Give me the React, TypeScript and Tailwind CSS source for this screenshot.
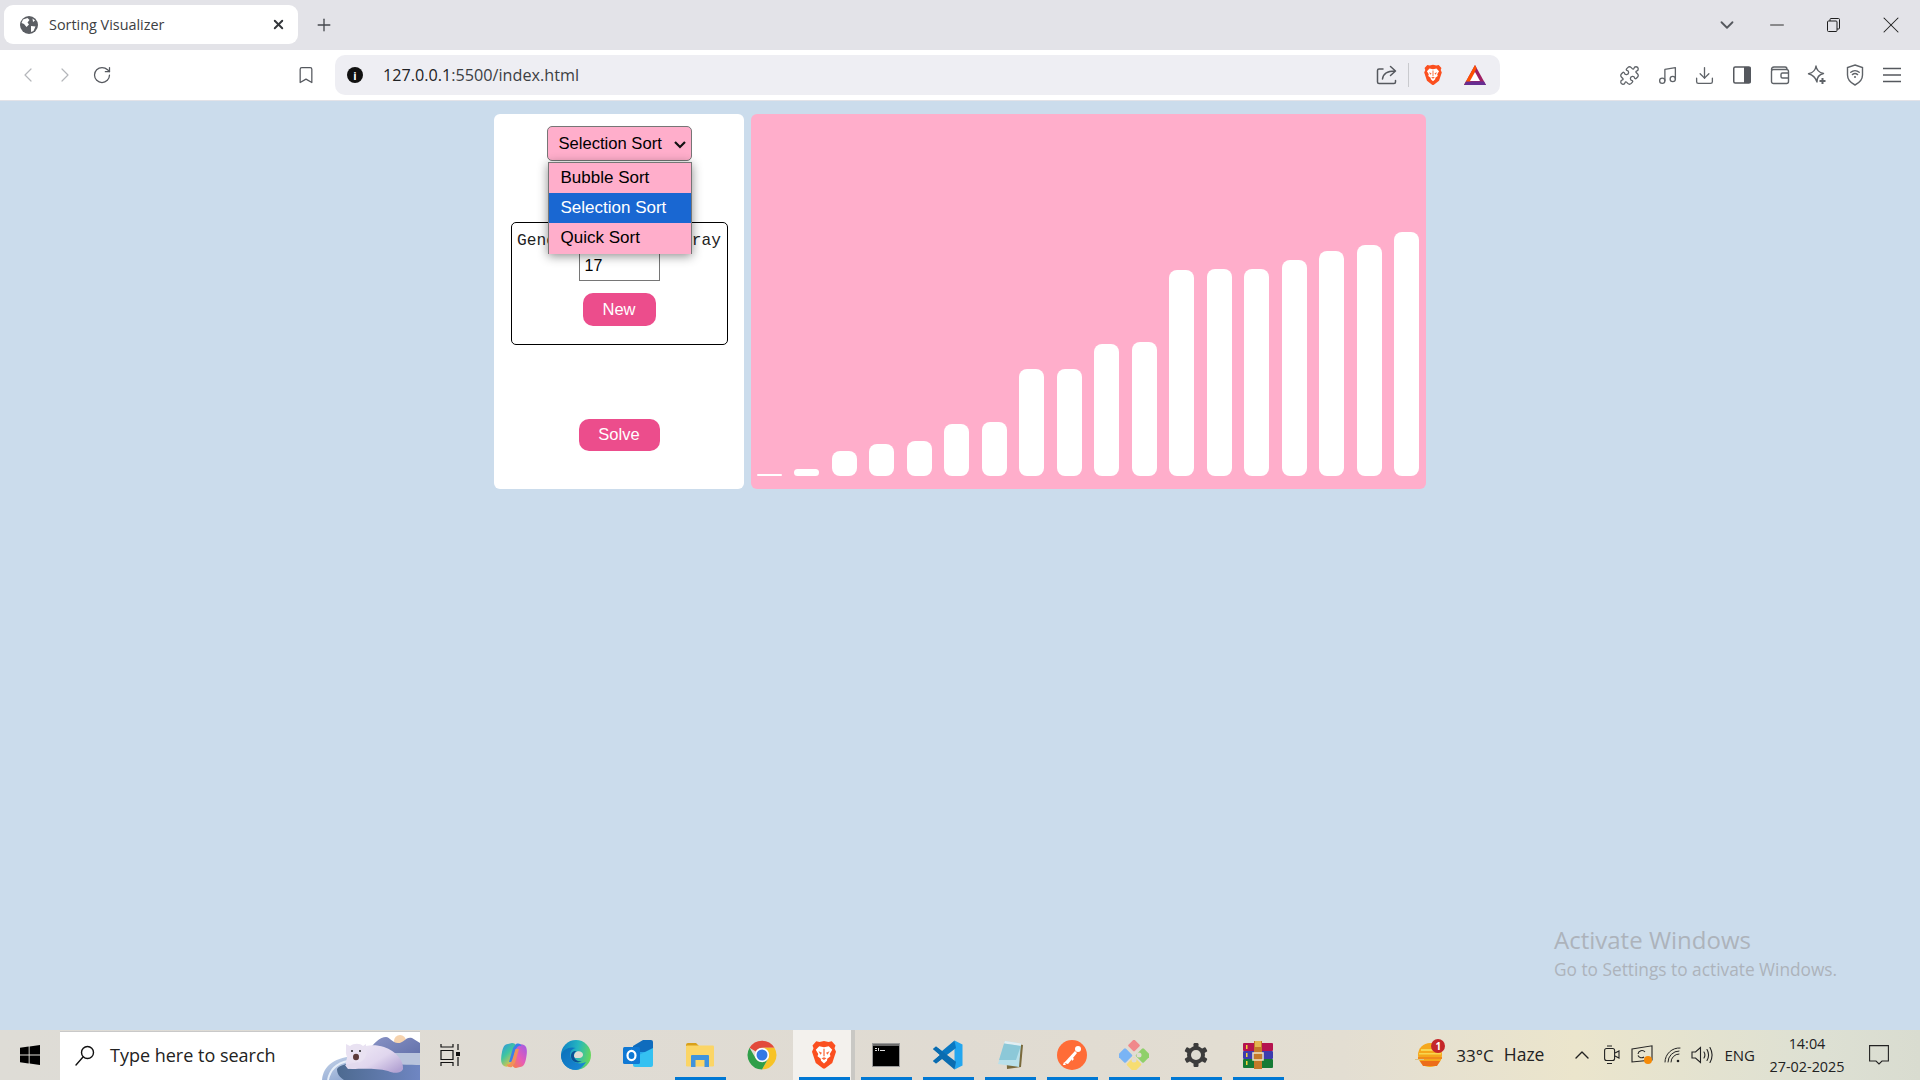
import React from "react";
import { Puzzle, Music, Download, ChevronLeft, ChevronRight, RotateCw, Bookmark, X, Plus, ChevronDown, Minus, ChevronUp } from "lucide-react";

const SANS = "font-['Open_Sans','Noto_Sans',sans-serif]";
const bars = [2, 7, 25, 32, 35, 52, 54, 107, 107, 132, 134, 206, 207, 207, 216, 225, 231, 244];

function Globe() {
  return (
    <svg width="18" height="18" viewBox="0 0 18 18">
      <circle cx="9" cy="9" r="9" fill="#5b5e63" />
      <path d="M3 3.5 L7.5 2 L9.5 4 L7.5 6.5 L9 8.5 L6.5 11 L4 8 L1.5 7 Z" fill="#fff" />
      <path d="M11 10 L15.5 10.5 L13.5 15 L11 16 Z M12.5 2.5 L15 4.5 L13 6 Z" fill="#fff" />
    </svg>
  );
}

function BraveLion({ size }: { size: number }) {
  return (
    <svg width={size} height={size} viewBox="0 0 24 24">
      <path d="M12 .8 L15.6 1.6 L18.2 1 L21.2 4.4 L20.4 6.6 L21.6 9.4 L18.6 18.4 L13 22.6 Q12 23.3 11 22.6 L5.4 18.4 L2.4 9.4 L3.6 6.6 L2.8 4.4 L5.8 1 L8.4 1.6 Z" fill="#fb4f1f" />
      <path d="M8.2 5 L12 5.8 L15.8 5 L18.6 7.8 L16.6 11.2 L17.2 13 L14.6 15 L14.4 16.6 L12 18.8 L9.6 16.6 L9.4 15 L6.8 13 L7.4 11.2 L5.4 7.8 Z" fill="#fff" />
      <path d="M7.6 9 L10.4 10.2 L9.2 11.8 Z M16.4 9 L13.6 10.2 L14.8 11.8 Z M10 14.6 L12 13.8 L14 14.6 L12 16 Z M11.5 7 H12.5 V13 H11.5 Z" fill="#fb6a3c" />
    </svg>
  );
}

function ShareIcon() {
  return (
    <svg width="22" height="20" viewBox="0 0 22 20" fill="none" stroke="#55585e" strokeWidth="1.5" strokeLinecap="round" strokeLinejoin="round">
      <path d="M7 4 H3 Q1.5 4 1.5 5.5 V17 Q1.5 18.5 3 18.5 H18 Q19.5 18.5 19.5 17 V15.5" />
      <path d="M6.5 14 C7 9 11 6 19 6 M14.5 1.5 L19.5 6 L14.5 10.5" />
    </svg>
  );
}

function BatIcon() {
  return (
    <svg width="22" height="20" viewBox="0 0 22 20">
      <path d="M11 0 L22 20 H0 Z" fill="#9e1f63" />
      <path d="M0 20 L11 0 L12.5 3 L5 20 Z" fill="#ff5000" />
      <path d="M0 20 H22 L20 16.5 H2 Z" fill="#662d91" />
      <path d="M11 7 L16 16 H6 Z" fill="#fff" />
    </svg>
  );
}

function SidePanel() {
  return (
    <svg width="18" height="18" viewBox="0 0 18 18">
      <rect x=".75" y="1" width="16.5" height="16" rx="1.5" fill="none" stroke="#55585e" strokeWidth="1.5" />
      <rect x="11" y="1" width="6.5" height="16" fill="#55585e" />
    </svg>
  );
}

function WalletIcon() {
  return (
    <svg width="20" height="20" viewBox="0 0 20 20" fill="none" stroke="#5f6368" strokeWidth="1.4" strokeLinejoin="round">
      <path d="M1.5 5 Q1.5 2 4 2 H15 Q17 2 17 4.5" />
      <rect x="1.5" y="4.5" width="17" height="14" rx="2" />
      <path d="M18.5 8 H12.5 Q11 8 11 9.5 V11.5 Q11 13 12.5 13 H18.5" />
    </svg>
  );
}

function SparkleIcon() {
  return (
    <svg width="20" height="20" viewBox="0 0 20 20" fill="none" stroke="#5f6368" strokeWidth="1.4" strokeLinejoin="round">
      <path d="M9 1 C9.5 5 12 7.5 16.5 8.5 C12 9.5 9.8 11.5 10 17 C8.5 12.5 6.5 10 1.5 8.8 C6 7.8 8.5 5 9 1 Z" />
      <path d="M15.5 13 V19 M12.5 16 H18.5" strokeWidth="2" />
    </svg>
  );
}

function ShieldIcon() {
  return (
    <svg width="18" height="22" viewBox="0 0 18 22" fill="none" stroke="#5f6368" strokeWidth="1.4" strokeLinecap="round">
      <path d="M9 1 L16.5 3.5 V11 C16.5 16 13 19 9 21 C5 19 1.5 16 1.5 11 V3.5 Z" />
      <path d="M4.8 8.2 C7.2 6.2 10.8 6.2 13.2 8.2 M6.4 10.6 C7.9 9.4 10.1 9.4 11.6 10.6" />
      <circle cx="9" cy="13" r="1" fill="#5f6368" stroke="none" />
    </svg>
  );
}

function MenuIcon() {
  return (
    <svg width="18" height="16" viewBox="0 0 18 16" stroke="#55585e" strokeWidth="1.5">
      <path d="M0 1.5 H18 M0 8 H18 M0 14.5 H18" />
    </svg>
  );
}

function RestoreIcon() {
  return (
    <svg width="13" height="14" viewBox="0 0 13 14" fill="none" stroke="#1f1f1f" strokeWidth="1">
      <rect x=".5" y="3" width="9.5" height="10.5" rx="1" />
      <path d="M3 3 V1.5 Q3 .5 4 .5 H11.5 Q12.5 .5 12.5 1.5 V10 Q12.5 11 11.5 11 H10" />
    </svg>
  );
}

function WinLogo() {
  return (
    <svg width="20" height="20" viewBox="0 0 20 20" fill="#000">
      <path d="M0 2.8 L8.7 1.6 V9.4 H0 Z M9.6 1.4 L20 0 V9.4 H9.6 Z M0 10.4 H8.7 V18.4 L0 17.2 Z M9.6 10.4 H20 V20 L9.6 18.6 Z" />
    </svg>
  );
}

function SearchGlass() {
  return (
    <svg width="20" height="22" viewBox="0 0 20 22" fill="none" stroke="#111" strokeWidth="1.4" strokeLinecap="round">
      <circle cx="12.5" cy="7.5" r="6" />
      <path d="M8 12 L1 20" />
    </svg>
  );
}

function Bear() {
  return (
    <svg width="98" height="49" viewBox="0 0 98 49" className="self-end">
      <defs>
        <linearGradient id="bw" x1="0" y1="0" x2="1" y2="1">
          <stop offset="0" stopColor="#c7d5ea" />
          <stop offset="1" stopColor="#7c98c9" />
        </linearGradient>
        <linearGradient id="bi" x1="0" y1="0" x2="1" y2="0">
          <stop offset="0" stopColor="#4d6a90" />
          <stop offset="1" stopColor="#6f86c2" />
        </linearGradient>
        <linearGradient id="bm" x1="0" y1="0" x2="1" y2="1">
          <stop offset="0" stopColor="#8a94c6" />
          <stop offset="1" stopColor="#5b6aa5" />
        </linearGradient>
        <linearGradient id="bb" x1="0" y1="0" x2="1" y2=".8">
          <stop offset="0" stopColor="#f1ecf7" />
          <stop offset=".6" stopColor="#e0d6ee" />
          <stop offset="1" stopColor="#b3a3d3" />
        </linearGradient>
      </defs>
      <circle cx="78" cy="10" r="6" fill="#f6d3ae" />
      <path d="M46 20 C52 12 58 6 64 6 C68 6 70 12 76 12 C82 12 84 5 90 7 L98 12 V34 H50 Z" fill="url(#bm)" />
      <path d="M60 22 H98 V38 H60 Z" fill="#b9c4dc" />
      <path d="M0 49 C1 34 14 26 34 25 H60 V49 Z" fill="url(#bw)" />
      <path d="M6 49 C8 38 16 32 26 30" fill="none" stroke="#e6eef8" strokeWidth="2" />
      <path d="M15 38 C18 33 30 31 50 32 C70 33 90 34 98 34 V49 H22 C17 46 15 42 15 38 Z" fill="url(#bi)" />
      <path d="M26 24 C34 15 50 12 62 16 C74 20 82 30 81 38 C80 42 72 43 66 40 C54 37 40 38 30 38 C24 38 22 34 26 24 Z" fill="url(#bb)" />
      <path d="M24 13 L28 15 C32 12 38 12 41 15 L44 13 L44 18 C46 24 42 31 35 32 C28 32 23 26 24 19 Z" fill="#e9e2f2" />
      <circle cx="30" cy="20" r="1" fill="#222" />
      <circle cx="38" cy="20" r="1" fill="#222" />
      <ellipse cx="34" cy="26" rx="3" ry="3.2" fill="#5c3a3a" />
      <path d="M23 34 L36 31 L38 36 L26 38 Z" fill="#e2daee" />
    </svg>
  );
}

function Copilot() {
  return (
    <svg width="30" height="30" viewBox="0 0 30 30">
      <defs>
        <linearGradient id="c1" x1="0" y1="0" x2=".6" y2="1">
          <stop offset="0" stopColor="#2f8fe8" />
          <stop offset=".5" stopColor="#3ec6a0" />
          <stop offset="1" stopColor="#f5c53c" />
        </linearGradient>
        <linearGradient id="c2" x1="1" y1="0" x2=".2" y2="1">
          <stop offset="0" stopColor="#9d5be8" />
          <stop offset=".6" stopColor="#e85cb4" />
          <stop offset="1" stopColor="#f57b52" />
        </linearGradient>
      </defs>
      <path d="M9 4 C5 4 4 8 3 12 C2 17 1 24 5 26 C8 27.5 11 27 13 22 L17 6 C17 4 15 3 13 3 Z" fill="url(#c1)" />
      <path d="M21 27 C25 27 26 23 27 19 C28 14 29 7 25 5 C22 3.5 19 4 17 9 L13 24 C13 26 15 28 17 28 Z" fill="url(#c2)" />
      <path d="M17 4 C20 3 22 4 22.5 6 C19 5 17.5 8 16.5 11 L13.5 22 L10 22 L14 8 Z" fill="#3a7ee8" />
      <path d="M13 27 C10 28 8 26 7.5 24.5 C11 25 12.5 22 13.5 19 L16.5 9 L20 9 L16 23 Z" fill="#f0905a" />
    </svg>
  );
}

function Edge() {
  return (
    <svg width="30" height="30" viewBox="0 0 30 30">
      <defs>
        <linearGradient id="e1" x1="0" y1=".2" x2="1" y2=".4">
          <stop offset="0" stopColor="#0d7fc6" />
          <stop offset=".55" stopColor="#25b6bf" />
          <stop offset="1" stopColor="#66d65e" />
        </linearGradient>
        <linearGradient id="e2" x1="0" y1="0" x2="1" y2="1">
          <stop offset="0" stopColor="#0a6fb8" />
          <stop offset="1" stopColor="#1b8ad8" />
        </linearGradient>
      </defs>
      <circle cx="15" cy="15" r="15" fill="url(#e1)" />
      <path d="M0 15 C2 9 9 6 15 8 C9 9 8 14 10 18 C12 23 19 25 25 22 C22 27 18 30 15 30 C6 30 0 23 0 15 Z" fill="url(#e2)" />
      <path d="M13 16 C13 11.5 18 10 21 12.5 C23 14.5 22 17.5 18.5 18 L14.5 18 C13.5 17.8 13 17 13 16 Z" fill="#e0dcd3" />
      <path d="M10 16 C10 12 13 10.5 15.5 11 C13.5 12 12.5 14 13 16.5 C13.6 20 17.5 22 21 21 C17 24 10 22 10 16 Z" fill="#0b4f94" />
    </svg>
  );
}

function Outlook() {
  return (
    <svg width="30" height="30" viewBox="0 0 30 30">
      <path d="M10 6 L20 0 H28 Q30 0 30 2 V12 H10 Z" fill="#0f6cbd" />
      <path d="M10 12 H30 V22 H10 Z" fill="#28a8ea" />
      <path d="M10 18 L30 8 V25 Q30 27 28 27 H12 Q10 27 10 25 Z" fill="#35c1f1" />
      <rect x="0" y="7" width="17" height="17" rx="1.5" fill="#0f78d4" />
      <ellipse cx="8.5" cy="15.5" rx="4" ry="4.6" fill="none" stroke="#fff" strokeWidth="2.2" />
    </svg>
  );
}

function Folder() {
  return (
    <svg width="28" height="24" viewBox="0 0 28 24">
      <path d="M0 2 Q0 0 2 0 H10 L13 3 H0 Z" fill="#d9a01a" />
      <rect x="0" y="2.5" width="28" height="21" rx="1.2" fill="#fbd566" />
      <path d="M5 24 V13 Q5 12 6 12 H22 Q23 12 23 13 V24 H18.5 V17 H9.5 V24 Z" fill="#3f93dc" />
    </svg>
  );
}

function Chrome() {
  return (
    <svg width="30" height="30" viewBox="0 0 24 24">
      <path d="M12 0.5a11.5 11.5 0 0 1 9.96 5.75H12a5.75 5.75 0 0 0-4.98 2.88L2.04 6.25A11.5 11.5 0 0 1 12 0.5z" fill="#e24a3b" />
      <path d="M21.96 6.25A11.5 11.5 0 0 1 12 23.5l4.98-8.63A5.75 5.75 0 0 0 12 6.25z" fill="#f7c327" />
      <path d="M2.04 6.25l4.98 8.62A5.75 5.75 0 0 0 16.98 14.87L12 23.5A11.5 11.5 0 0 1 2.04 6.25z" fill="#2f9f49" />
      <circle cx="12" cy="12" r="5.6" fill="#fff" />
      <circle cx="12" cy="12" r="4.4" fill="#3478e5" />
    </svg>
  );
}

function Terminal() {
  return (
    <svg width="28" height="24" viewBox="0 0 28 24">
      <rect width="28" height="24" fill="#9a9a9a" />
      <rect x="1" y="3" width="26" height="20" fill="#000" />
      <rect x="1" y="1" width="26" height="2" fill="#6a6a6a" />
      <path d="M3 5 H5 V6 H3 Z M3 7 H5 V8 H3 Z M6 5 H7 V8 H6 Z M8 7 H13 V8 H8 Z" fill="#ddd" />
    </svg>
  );
}

function VSCode() {
  return (
    <svg width="30" height="30" viewBox="0 0 30 30">
      <path d="M21.5 0.5 L29.5 4.5 V25.5 L21.5 29.5 Z" fill="#23a6ef" />
      <path d="M21.5 0.5 L23 8 L8 19.5 L3 23.5 L0 21 L7 15 L0 9 L3 6.5 L9 11 Z" fill="#0a78c2" />
      <path d="M3 6.5 L23 21.8 L21.5 29.5 L9 19 L3 23.5 L0 21 L7 15 L0 9 Z" fill="#0a6cb0" />
    </svg>
  );
}

function Notepad() {
  return (
    <svg width="28" height="30" viewBox="0 0 28 30">
      <path d="M10 2 L27 5 L25 27 L11 29 Z" fill="#7a6a3c" />
      <path d="M9 1 L25 3.5 L23 27 L2 24 Z" fill="#b9e0ea" />
      <path d="M9 1 L25 3.5 L24.8 6 L8 3.5 Z" fill="#e2eef2" />
      <path d="M8 3.5 L24.8 6 L20 20 L3 20 Z" fill="#8cc8d8" />
    </svg>
  );
}

function Postman() {
  return (
    <svg width="30" height="30" viewBox="0 0 30 30">
      <circle cx="15" cy="15" r="15" fill="#ff6c37" />
      <path d="M7 23 L18 11 L20 13 L11 24 Z" fill="#fff" />
      <circle cx="21" cy="9" r="3" fill="#fff" />
      <path d="M7 22 L9 25 L6 25 Z" fill="#fff" />
      <path d="M14 16 L17 19 L15 21 Z" fill="#fff" />
    </svg>
  );
}

function GitApp() {
  return (
    <svg width="30" height="30" viewBox="0 0 30 30">
      <rect x="10.5" y="1" width="9" height="9" rx="1.5" transform="rotate(45 15 5.5) translate(0 0)" fill="#f0898b" />
      <rect x="0.5" y="10" width="11" height="11" rx="1.5" transform="rotate(45 6 15.5)" fill="#79b4f5" />
      <rect x="18.5" y="10" width="11" height="11" rx="1.5" transform="rotate(45 24 15.5)" fill="#8fd06a" />
      <rect x="9.5" y="19" width="11" height="11" rx="1.5" transform="rotate(45 15 24.5)" fill="#f7dd72" />
      <circle cx="20" cy="15" r="2.5" fill="#e0dcd3" />
      <circle cx="15" cy="20" r="2.5" fill="#e0dcd3" />
    </svg>
  );
}

function Gear() {
  return (
    <svg width="24" height="24" viewBox="0 0 24 24">
      <g fill="#3c3c3c">
        <rect x="9.5" y="0" width="5" height="24" rx="1.2" />
        <rect x="9.5" y="0" width="5" height="24" rx="1.2" transform="rotate(60 12 12)" />
        <rect x="9.5" y="0" width="5" height="24" rx="1.2" transform="rotate(120 12 12)" />
      </g>
      <circle cx="12" cy="12" r="7" fill="none" stroke="#3c3c3c" strokeWidth="4" />
      <circle cx="12" cy="12" r="5" fill="#dedcd2" />
    </svg>
  );
}

function WinRar() {
  return (
    <svg width="30" height="30" viewBox="0 0 30 30">
      <rect y="3" width="30" height="8" rx="1" fill="#b5134f" />
      <rect y="11" width="30" height="8" rx="1" fill="#3c3cae" />
      <rect y="19" width="30" height="9" rx="1" fill="#147a35" />
      <path d="M3 5 H4.5 V9 H3 Z M3 13 H4.5 V17 H3 Z M3 21 H4.5 V25 H3 Z" fill="#f3d23a" />
      <rect x="11" y="1" width="8" height="28" fill="#c4792a" />
      <rect x="12" y="1" width="6" height="6" fill="#e3b650" />
      <rect x="10" y="13" width="10" height="7" fill="none" stroke="#efe4c4" strokeWidth="1.5" />
    </svg>
  );
}

function Weather() {
  return (
    <svg width="30" height="26" viewBox="0 0 30 26">
      <circle cx="15" cy="13" r="12" fill="#f5a81c" />
      <path d="M6 7 H24 V9 H6 Z M4 11 H26 V12.5 H4 Z" fill="#f8d650" />
      <path d="M3 15 H27 V17 H3 Z" fill="#f08a1c" />
      <path d="M5 19 H25 L22 24 H8 Z" fill="#ec6d1a" />
      <path d="M0 17 H9 V18 H0 Z" fill="#d9c48c" />
    </svg>
  );
}

function TrayIcons() {
  return (
    <div className="flex items-center">
      <ChevronUp className="w-[24px] h-[24px] ml-[26px] text-[#222]" strokeWidth={1.4} />
      <svg width="16" height="20" viewBox="0 0 16 20" fill="none" stroke="#222" strokeWidth="1.1" className="ml-[10px]">
        <rect x=".6" y="3.5" width="10" height="12" rx="2" />
        <path d="M11 8 L15 6 V13 L11 11" />
        <path d="M3 1 H8 M3 18.5 H8" />
      </svg>
      <svg width="22" height="20" viewBox="0 0 22 20" fill="none" stroke="#222" strokeWidth="1.1" className="ml-[11px] relative">
        <path d="M1 4 L21 .8 V15 L1 17 Z" />
        <path d="M14 7 A4 4 0 0 0 7 9 M7 10.5 A4 4 0 0 0 13 12" />
        <circle cx="17" cy="15" r="4" fill="#f58a07" stroke="none" />
      </svg>
      <svg width="18" height="18" viewBox="0 0 18 18" fill="none" stroke="#222" strokeWidth="1" strokeLinecap="round" className="ml-[11px]">
        <path d="M1 16 A14 14 0 0 1 16 2 M4 16 A11 11 0 0 1 15 5 M7 16 A8 8 0 0 1 15 8" />
        <circle cx="14" cy="15" r="1.3" fill="#222" stroke="none" />
      </svg>
      <svg width="22" height="18" viewBox="0 0 22 18" fill="none" stroke="#222" strokeWidth="1.1" strokeLinecap="round" className="ml-[9px]">
        <path d="M1 6 H4.5 L9.5 1.5 V16.5 L4.5 12 H1 Z" />
        <path d="M13 6 C14.2 8 14.2 10 13 12 M16 3.5 C18 7 18 11 16 14.5 M19 1.5 C21.5 6 21.5 12 19 16.5" />
      </svg>
    </div>
  );
}

const taskItems: { icon: React.ReactNode; line: boolean; active?: boolean }[] = [
  { icon: <Copilot />, line: false },
  { icon: <Edge />, line: false },
  { icon: <Outlook />, line: false },
  { icon: <Folder />, line: true },
  { icon: <Chrome />, line: false },
  { icon: <BraveLion size={30} />, line: true, active: true },
  { icon: <Terminal />, line: true },
  { icon: <VSCode />, line: true },
  { icon: <Notepad />, line: true },
  { icon: <Postman />, line: true },
  { icon: <GitApp />, line: true },
  { icon: <Gear />, line: true },
  { icon: <WinRar />, line: true },
];

function TaskSlot({ icon, line, active }: { icon: React.ReactNode; line: boolean; active?: boolean }) {
  return (
    <div className={`relative w-[62px] h-[50px] flex items-center justify-center ${active ? "bg-[#f3f1ed]" : ""}`}>
      {icon}
      {active && <span className="absolute right-0 top-0 bottom-0 w-[4px] bg-[#c9c8c4]" />}
      {line && <span className="absolute left-[6px] right-[5px] bottom-0 h-[3px] bg-[#0078d4]" />}
    </div>
  );
}

export default function App() {
  return (
    <div className={`w-[1920px] h-[1080px] flex flex-col overflow-hidden bg-[#cbdcec] ${SANS}`}>
      {/* tab strip */}
      <div className="h-[50px] shrink-0 bg-[#e3e3e8] flex pt-[5px] pl-[4px]">
        <div className="w-[294px] h-[39px] bg-white rounded-[9px] flex items-center pl-[16px] pr-[12px]">
          <Globe />
          <span className="ml-[11px] mt-[1px] text-[14.4px] text-[#3c4043] leading-none">Sorting Visualizer</span>
          <X className="ml-auto w-[15px] h-[15px] text-[#33363a]" strokeWidth={3} />
        </div>
        <div className="w-[52px] h-[39px] flex items-center justify-center">
          <Plus className="w-[20px] h-[20px] text-[#45484d]" strokeWidth={1.6} />
        </div>
        <div className="ml-auto flex h-[39px] items-center">
          <div className="w-[42px] flex justify-center"><ChevronDown className="w-[22px] h-[22px] text-[#55585e]" strokeWidth={2} /></div>
          <div className="w-[57px] flex justify-center"><Minus className="w-[22px] h-[22px] text-[#1f1f1f]" strokeWidth={1} /></div>
          <div className="w-[57px] flex justify-center"><RestoreIcon /></div>
          <div className="w-[58px] flex justify-center"><X className="w-[28px] h-[28px] text-[#1f1f1f]" strokeWidth={0.9} /></div>
        </div>
      </div>

      {/* toolbar */}
      <div className="h-[51px] shrink-0 bg-white border-b border-[#e3e3e8] flex items-center pl-[9px]">
        <div className="w-[37px] flex justify-center"><ChevronLeft className="w-[24px] h-[24px] text-[#b4b6ba]" strokeWidth={1.2} /></div>
        <div className="w-[37px] flex justify-center"><ChevronRight className="w-[24px] h-[24px] text-[#b4b6ba]" strokeWidth={1.2} /></div>
        <div className="w-[37px] flex justify-center"><RotateCw className="w-[20px] h-[20px] text-[#55585e]" strokeWidth={1.5} /></div>
        <div className="ml-[167px] w-[37px] flex justify-center"><Bookmark className="w-[20px] h-[20px] text-[#55585e]" strokeWidth={1.5} /></div>
        <div className="ml-[11px] w-[1165px] h-[40px] rounded-[10px] bg-[#eeeef3] flex items-center pl-[12px] pr-[14px]">
          <span className="w-[16px] h-[16px] rounded-full bg-[#111] flex items-center justify-center text-white text-[11px] font-bold leading-none">i</span>
          <span className="ml-[20px] text-[16.2px] leading-none text-[#3c4043] mt-[1px]"><span className="text-[#202124]">127.0.0.1</span>:5500/index.html</span>
          <div className="ml-auto flex items-center">
            <ShareIcon />
            <span className="ml-[10px] w-px h-[24px] bg-[#c9cace]" />
            <span className="ml-[13px] flex"><BraveLion size={22} /></span>
            <span className="ml-[20px] flex"><BatIcon /></span>
          </div>
        </div>
        <div className="ml-[111px] flex items-center">
          <div className="w-[37.5px] flex justify-center"><Puzzle className="w-[21px] h-[21px] text-[#5f6368]" strokeWidth={1.5} /></div>
          <div className="w-[37.5px] flex justify-center"><Music className="w-[21px] h-[21px] text-[#5f6368]" strokeWidth={1.5} /></div>
          <div className="w-[37.5px] flex justify-center"><Download className="w-[21px] h-[21px] text-[#5f6368]" strokeWidth={1.5} /></div>
          <div className="w-[37.5px] flex justify-center"><SidePanel /></div>
          <div className="w-[37.5px] flex justify-center"><WalletIcon /></div>
          <div className="w-[37.5px] flex justify-center"><SparkleIcon /></div>
          <div className="w-[37.5px] flex justify-center"><ShieldIcon /></div>
          <div className="w-[37.5px] flex justify-center"><MenuIcon /></div>
        </div>
      </div>

      {/* page */}
      <main className="relative flex-1 flex justify-center items-start gap-[7px] pt-[13px] font-['Liberation_Sans',Arial,sans-serif]">
        <div className="w-[250px] h-[375px] bg-white rounded-[6px] flex flex-col items-center pt-[12px]">
          <div className="relative">
            <div className="w-[145px] h-[35px] bg-[#ffaecb] border border-[#767676] rounded-[5px] flex items-center pl-[11px] pt-[1px] text-[16.6px] text-black">
              Selection Sort
              <svg width="12" height="8" viewBox="0 0 12 8" fill="none" stroke="#111" strokeWidth="2.2" className="ml-auto mr-[5px] mt-[2px]">
                <path d="M1 1 L6 6 L11 1" />
              </svg>
            </div>
            <div className="absolute z-10 left-[1px] top-[36px] w-[144px] h-[92px] bg-[#ffaecb] border-x border-t border-[#767676] shadow-[0_2px_10px_rgba(0,0,0,0.45)] text-[17px] text-black">
              <div className="h-[30px] pl-[12px] flex items-center">Bubble Sort</div>
              <div className="h-[30px] pl-[12px] flex items-center bg-[#1967d2] text-white">Selection Sort</div>
              <div className="h-[31px] pl-[12px] pb-[1px] flex items-center">Quick Sort</div>
            </div>
          </div>
          <div className="mt-[61px] w-[217px] h-[123px] border border-black rounded-[5px] flex flex-col items-center pt-[9px]">
            <div className="font-['Liberation_Mono',monospace] text-[16.2px] leading-[18px] text-[#222] whitespace-nowrap">Generate Random Array</div>
            <input
              readOnly
              value="17"
              className="w-[81px] h-[31px] border border-[#767676] pl-[5px] text-[16px] text-black bg-white outline-none"
            />
            <button className="mt-[12px] pb-[1px] w-[73px] h-[33px] rounded-[10px] bg-[#ec4d8c] text-white text-[16.5px]">New</button>
          </div>
          <button className="mt-[74px] pb-[1px] w-[81px] h-[32px] rounded-[10px] bg-[#ec4d8c] text-white text-[16.5px]">Solve</button>
        </div>

        <div className="w-[675px] h-[375px] bg-[#ffaecb] rounded-[6px] flex items-end justify-between pl-[6px] pr-[7px] pb-[13px]">
          {bars.map((h, i) => (
            <div
              key={i}
              className={`w-[25px] bg-white ${h > 2 ? "rounded-[8px]" : ""}`}
              style={{ height: h, borderRadius: h < 16 ? h / 2 : undefined }}
            />
          ))}
        </div>

        <div className={`absolute left-[1554px] bottom-[45px] text-[#adb3bb] ${SANS}`}>
          <div className="text-[24px] leading-[30px]">Activate Windows</div>
          <div className="text-[17.3px] leading-[30px]">Go to Settings to activate Windows.</div>
        </div>
      </main>

      {/* taskbar */}
      <div className="h-[50px] shrink-0 flex items-center bg-[linear-gradient(90deg,#dedcd6_0%,#e0dbd2_50%,#e3ded2_70%,#ebe5cc_82%,#dde0d3_95%,#d9dcd0_100%)]">
        <div className="w-[60px] flex justify-center"><WinLogo /></div>
        <div className="w-[360px] h-[49px] mt-[1px] bg-white border-t border-[#c9c9c9] flex items-center pl-[15px] overflow-hidden">
          <SearchGlass />
          <span className="ml-[15px] mb-[2px] text-[18px] text-[#222] leading-none">Type here to search</span>
          <div className="ml-auto flex self-end"><Bear /></div>
        </div>
        <div className="w-[63px] pr-[3px] flex justify-center">
          <svg width="20" height="22" viewBox="0 0 20 22" fill="none" stroke="#111" strokeWidth="1.2">
            <path d="M1 0 V3 H13 V0 M1 6.5 H13 V15.5 H1 Z M1 22 V18.5 H13 V22 M18 0 V6 M18 13 V22" />
            <rect x="16" y="8" width="4" height="4" fill="#111" stroke="none" />
          </svg>
        </div>
        {taskItems.map((t, i) => (
          <TaskSlot key={i} icon={t.icon} line={t.line} active={t.active} />
        ))}
        <div className="ml-auto flex items-center h-full text-[#222]">
          <div className="relative flex">
            <Weather />
            <span className="absolute -top-[3px] right-[0px] w-[14px] h-[14px] rounded-full bg-[#c4262a] text-white text-[10px] font-bold flex items-center justify-center leading-none">1</span>
          </div>
          <span className="ml-[11px] text-[17px] leading-none">33°C</span>
          <span className="ml-[10px] text-[17.5px] leading-none">Haze</span>
          <TrayIcons />
          <span className="ml-[11px] text-[15px] leading-none">ENG</span>
          <div className="ml-[10px] w-[84px] flex flex-col items-center text-[14.4px] leading-[23px]">
            <span>14:04</span>
            <span>27-02-2025</span>
          </div>
          <div className="ml-[20px] mr-[31px] flex">
            <svg width="20" height="20" viewBox="0 0 20 20" fill="none" stroke="#222" strokeWidth="1.1">
              <path d="M.6 .6 H19.4 V16 H13 L10 19 L7 16 H.6 Z" />
            </svg>
          </div>
        </div>
      </div>
    </div>
  );
}
